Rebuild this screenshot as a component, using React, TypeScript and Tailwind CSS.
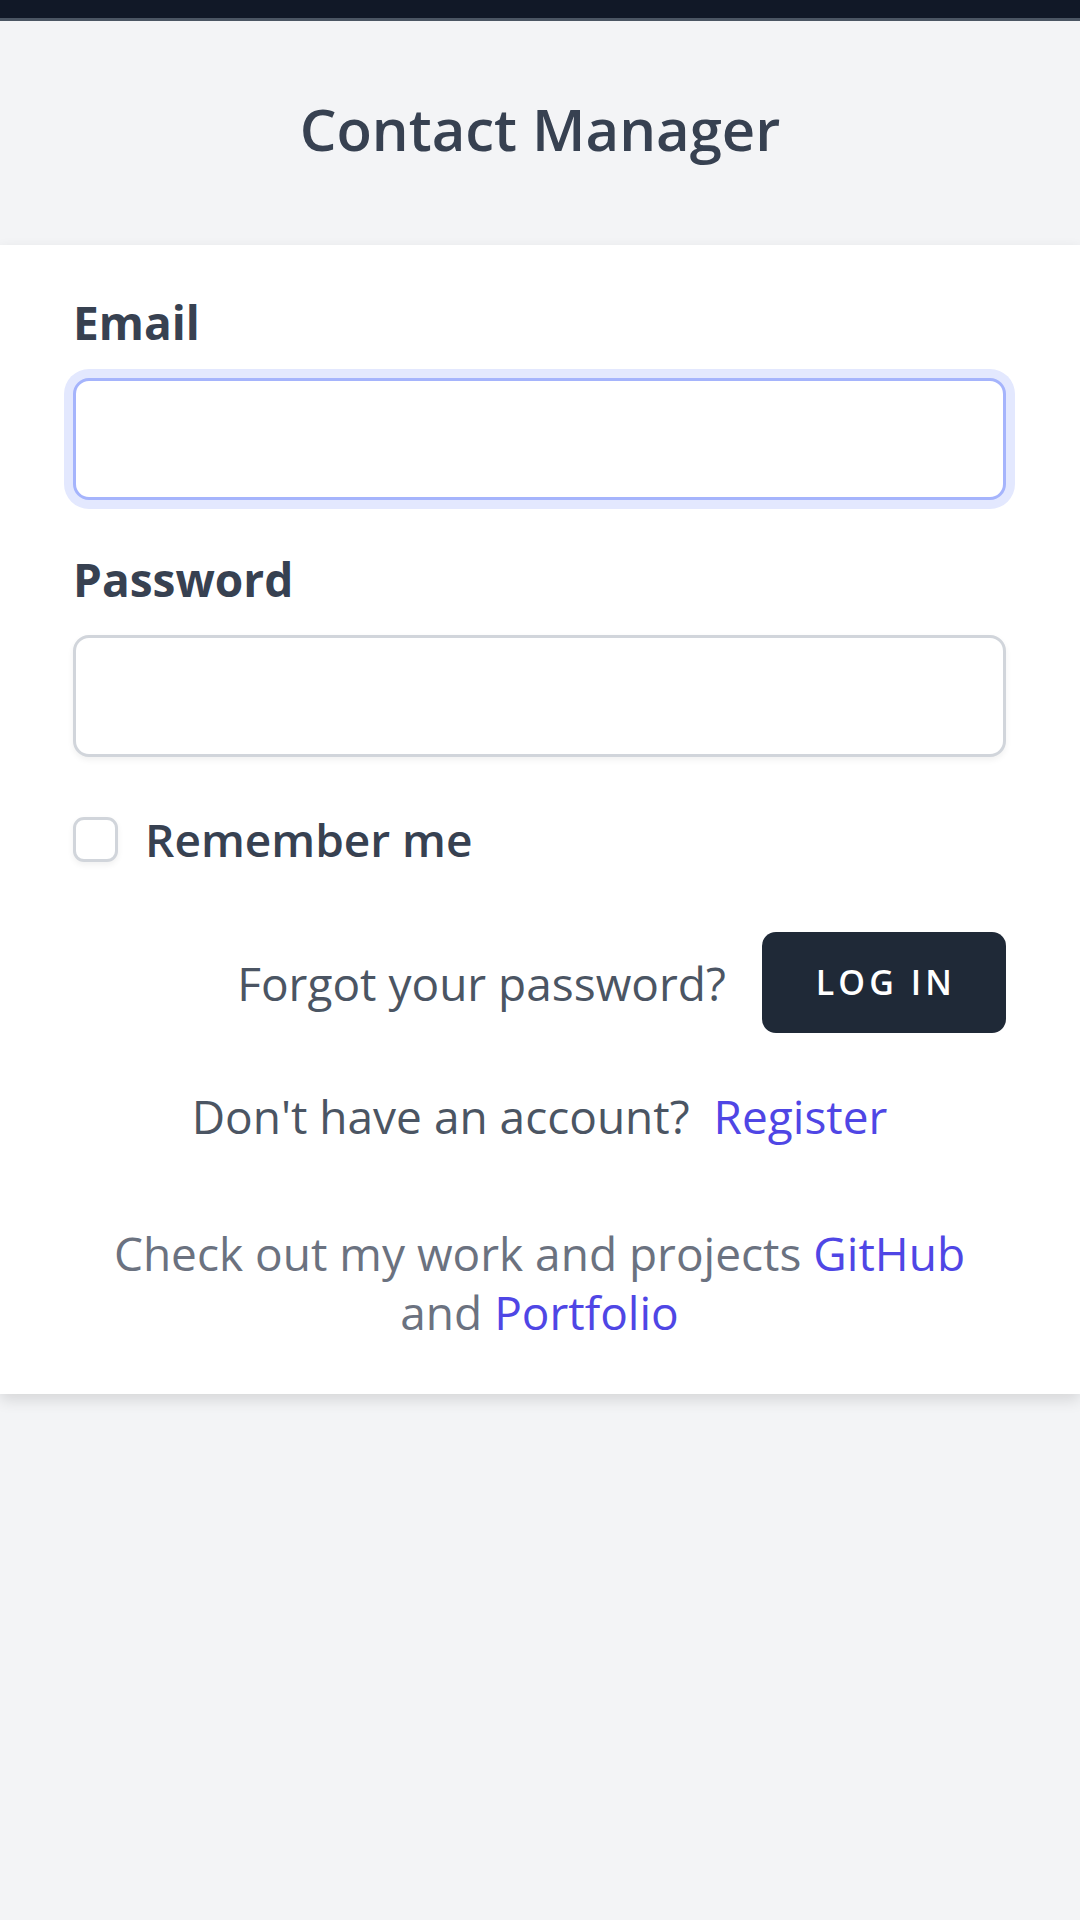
import React from 'react';

const font = { fontFamily: '"Open Sans", "Noto Sans", sans-serif' };

function Field({ label, type, focused }: { label: string; type: string; focused?: boolean }) {
  return (
    <div>
      <label className="block text-[46px] leading-[70px] font-bold text-[#374151]">{label}</label>
      <input
        type={type}
        className={
          'mt-[21px] block w-full h-[122px] rounded-[16px] border-[3px] bg-white px-[36px] text-[46px] outline-none ' +
          (focused
            ? 'border-[#a5b4fc] ring-[9px] ring-[#e3e8fe]'
            : 'border-[#d1d5db] shadow-[0_3px_6px_rgba(0,0,0,0.06)]')
        }
      />
    </div>
  );
}

export default function App() {
  return (
    <div className="min-h-[1920px] bg-[#f3f4f6]" style={font}>
      <div className="h-[21px] bg-[#111827] border-b-[3px] border-[#4b5563]" />

      <header className="pt-[68px] pb-[76px] text-center">
        <h1 className="text-[58px] leading-[80px] font-semibold text-[#374151]">Contact Manager</h1>
      </header>

      <main className="bg-white shadow-[0_6px_14px_rgba(0,0,0,0.12)] pl-[73px] pr-[74px] pt-[42px] pb-[52px]">
        <form onSubmit={(e) => e.preventDefault()}>
          <Field label="Email" type="email" focused />

          <div className="mt-[44px]">
            <Field label="Password" type="password" />
          </div>

          <label className="mt-[47px] flex items-center h-[70px]">
            <input
              type="checkbox"
              className="appearance-none w-[45px] h-[45px] rounded-[11px] border-[3px] border-[#d1d5db] bg-white shadow-[0_3px_6px_rgba(0,0,0,0.06)]"
            />
            <span className="ml-[27px] text-[46px] leading-[70px] font-semibold text-[#374151]">Remember me</span>
          </label>

          <div className="mt-[58px] flex items-center justify-end">
            <a href="#" className="text-[46px] leading-[70px] text-[#4b5563]">
              Forgot your password?
            </a>
            <button
              type="submit"
              className="ml-[36px] h-[101px] pl-[54px] pr-[50px] rounded-[14px] bg-[#1f2937] text-white text-[34px] font-semibold uppercase tracking-[0.12em]"
            >
              Log in
            </button>
          </div>

          <p className="mt-[48px] text-center text-[46px] leading-[70px] text-[#4b5563]">
            Don't have an account?
            <a href="#" className="ml-[24px] text-[#4f46e5]">Register</a>
          </p>

          <p className="mt-[73px] text-center text-[46px] leading-[59px] text-[#6b7280]">
            Check out my work and projects <a href="#" className="text-[#4f46e5]">GitHub</a> and{' '}
            <a href="#" className="text-[#4f46e5]">Portfolio</a>
          </p>
        </form>
      </main>
    </div>
  );
}
